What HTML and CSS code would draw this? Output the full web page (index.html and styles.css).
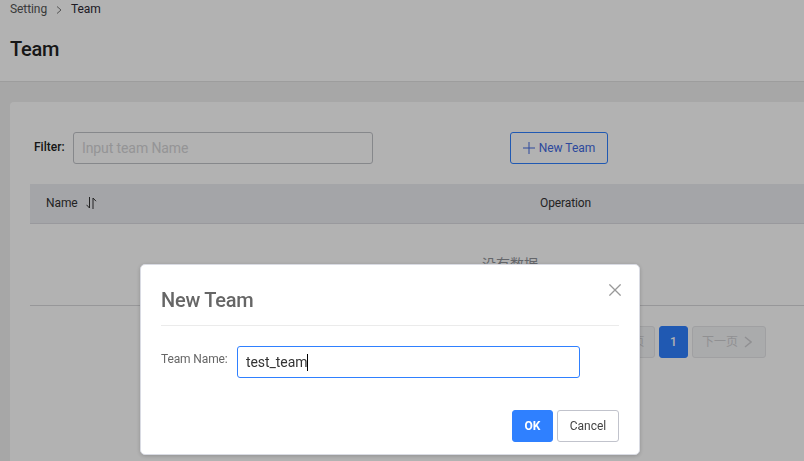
FILE: index.html
```
<!DOCTYPE html>
<html lang="en">
<head>
<meta charset="utf-8">
<title>Team</title>
<link rel="stylesheet" href="styles.css">
</head>
<body>
<header class="page-header">
  <nav class="breadcrumb">
    <span class="crumb">Setting</span>
    <svg class="crumb-arrow" width="6" height="8" viewBox="0 0 6 8"><path d="M1 .5 5 4 1 7.5"/></svg>
    <span class="crumb current">Team</span>
  </nav>
  <h1>Team</h1>
</header>
<main class="card">
  <div class="toolbar">
    <label class="filter-label" for="filter">Filter:</label>
    <input class="input filter" id="filter" placeholder="Input team Name">
    <button class="btn new-team"><svg width="12" height="12" viewBox="0 0 12 12"><path d="M6 0v12M0 6h12"/></svg><span>New Team</span></button>
  </div>
  <div class="table">
    <div class="thead">
      <div class="th">Name
        <svg class="sort" width="11" height="12" viewBox="0 0 11 12"><path d="M3.5 0v11L.5 7.8M7 12V1l3 3.2"/></svg>
      </div>
      <div class="th">Operation</div>
    </div>
    <div class="empty">没有数据</div>
  </div>
  <div class="pagination">
    <button class="page disabled prev"><svg width="8" height="12" viewBox="0 0 8 12"><path d="M7 1 1 6l6 5"/></svg><span>上一页</span></button>
    <button class="page active">1</button>
    <button class="page disabled next"><span>下一页</span><svg width="8" height="12" viewBox="0 0 8 12"><path d="m1 1 6 5-6 5"/></svg></button>
  </div>
</main>
<div class="overlay">
  <section class="modal">
    <div class="modal-head">
      <h2>New Team</h2>
      <svg class="close" width="12" height="12" viewBox="0 0 12 12"><path d="m.4.4 11.2 11.2M11.6.4.4 11.6"/></svg>
    </div>
    <div class="field">
      <span class="field-label">Team Name:</span>
      <div class="input name"><span>test_team</span><i class="caret"></i></div>
    </div>
    <div class="actions">
      <button class="btn ok">OK</button>
      <button class="btn cancel">Cancel</button>
    </div>
  </section>
</div>
</body>
</html>
```
FILE: styles.css
```
* { box-sizing: border-box; }
body {
  margin: 0;
  height: 461px;
  overflow: hidden;
  background: #f0f0f0;
  color: #222;
  font: 12px/16px Roboto, "Noto Sans CJK SC", sans-serif;
}
svg { fill: none; stroke: currentColor; flex: none; }
h1, h2 { margin: 0; font-weight: 500; letter-spacing: -.25px; }
button, input { font: inherit; }
.page-header { height: 82px; background: #fff; border-bottom: 1px solid #e1e1e1; padding: 1px 10px 0; }
.breadcrumb { display: flex; align-items: center; height: 16px; letter-spacing: -.08px; color: #555; }
.crumb-arrow { margin: 2px 9px 0 9px; color: #777; }
.current { color: #2c2833; }
h1 { margin-top: 20px; font-size: 20px; line-height: 24px; color: #222; }
.card { margin: 20px 0 0 10px; height: 380px; padding: 30px 0 0 20px; background: #fff; border-radius: 4px 0 0 0; }
.toolbar { display: flex; height: 32px; }
.filter-label { width: 43px; padding: 7px 0 0 4px; font-weight: 500; }
.input { height: 32px; border: 1px solid #c1c3c8; border-radius: 3px; background: #fff; font-size: 14px; outline: 0; }
.filter { width: 300px; padding: 0 8px; letter-spacing: -.1px; }
.filter::placeholder { color: #d5d5d7; opacity: 1; }
.btn { height: 32px; border: 1px solid #c1c3cc; border-radius: 3px; background: #fff; padding: 0; letter-spacing: 0; }
.new-team { display: flex; align-items: center; justify-content: center; gap: 4px; width: 98px; margin-left: 137px; border-color: #2f80ff; color: #4169e1; }
.table { margin-top: 20px; border-bottom: 1px solid #d9d9dc; }
.thead { display: grid; grid-template-columns: 494px 1fr; height: 40px; background: #ebecf1; border-bottom: 1px solid #dcdce1; }
.th { display: flex; align-items: center; padding: 0 16px 2px; letter-spacing: -.1px; color: #333; }
.sort { margin: 1px 0 0 8px; }
.empty { height: 81px; padding: 30px 0 0 452px; font-size: 14px; line-height: 20px; color: #909399; }
.pagination { display: flex; justify-content: flex-end; gap: 4px; margin: 20px 38px 0 0; }
.page { display: flex; align-items: center; justify-content: center; gap: 6px; height: 32px; padding: 0; border: 1px solid #e5e6e8; border-radius: 3px; background: #f4f5f7; }
.disabled { width: 74px; font-size: 12px; color: #cfcfd2; }
.next { padding-right: 4px; }
.prev { padding-left: 3px; }
.disabled svg { stroke-width: 1.5; }
.active { width: 29px; border-color: #2f80ff; background: #2f80ff; color: #fff; font-weight: 500; }
.overlay { position: fixed; inset: 0; display: flex; justify-content: center; align-items: flex-start; padding: 264px 24px 0 0; background: rgba(0, 0, 0, .3); }
.modal { width: 500px; height: 191px; padding: 20px; border: 1px solid #d9dbe3; border-radius: 5px; background: #fff; box-shadow: 0 1px 4px rgba(0, 0, 0, .2); }
.modal-head { display: flex; justify-content: space-between; height: 41px; border-bottom: 1px solid #ebebeb; }
h2 { padding-top: 3px; font-size: 20px; line-height: 24px; color: #666; }
.close { margin: -1px -2px 0 0; color: #999; stroke-width: 1.3; }
.field { display: flex; margin-top: 20px; }
.field-label { width: 76px; padding-top: 5px; letter-spacing: -.13px; color: #666; }
.name { display: flex; align-items: center; width: 343px; padding: 0 8px; border-color: #2f80ff; letter-spacing: -.07px; color: #333; }
.caret { width: 1px; height: 17px; background: #000; }
.actions { display: flex; justify-content: flex-end; gap: 4px; margin-top: 32px; }
.ok { width: 41px; border-color: #2f80ff; background: #2f80ff; color: #fff; font-weight: 700; }
.cancel { width: 62px; color: #444; }
```
